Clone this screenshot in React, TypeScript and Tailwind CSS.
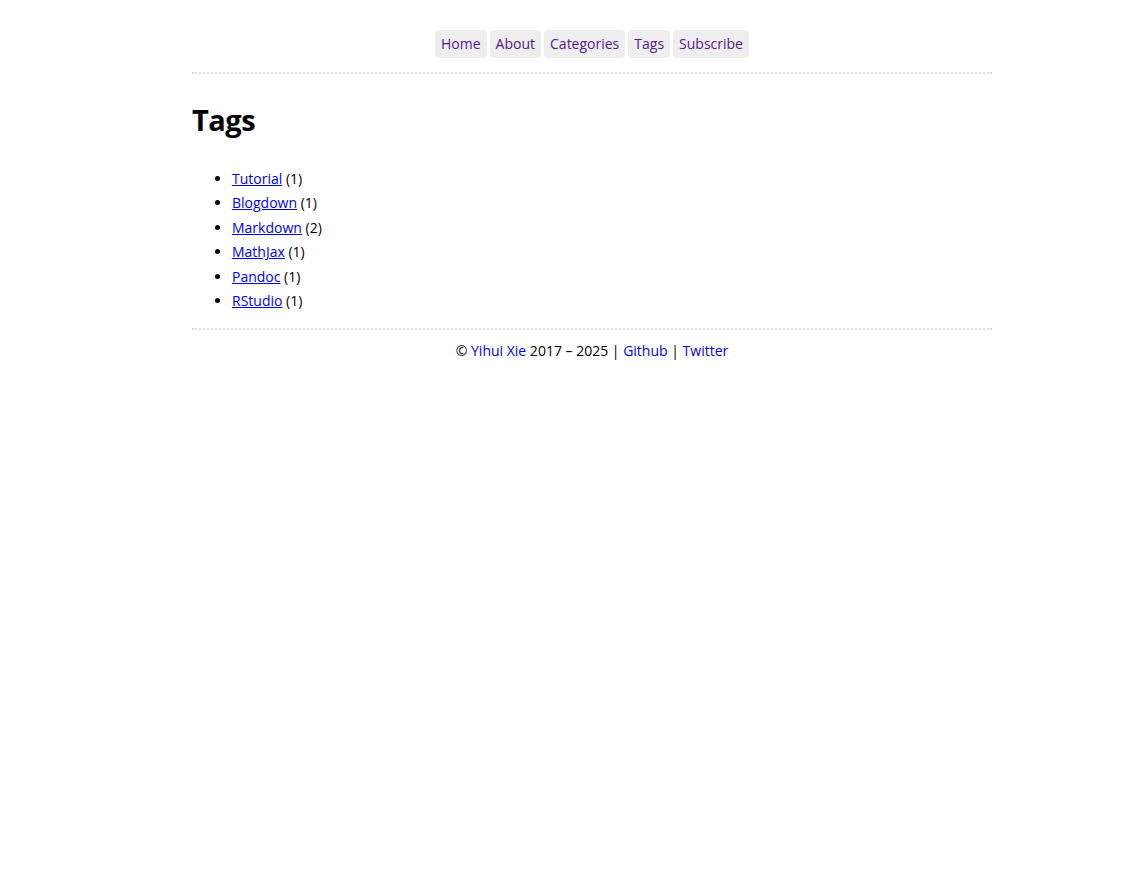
const navItems = ['Home', 'About', 'Categories', 'Tags', 'Subscribe'];

const tags = [
  { name: 'Tutorial', count: 1 },
  { name: 'Blogdown', count: 1 },
  { name: 'Markdown', count: 2 },
  { name: 'MathJax', count: 1 },
  { name: 'Pandoc', count: 1 },
  { name: 'RStudio', count: 1 },
];

export default function App() {
  return (
    <div className="min-h-[870px] bg-white text-black font-['Open_Sans',sans-serif] text-[14px]">
      <div className="ml-[192px] w-[800px]">
        <nav className="flex justify-center gap-[3px] pt-[30px] pb-[14px] border-b-2 border-dotted border-[#ddd]">
          {navItems.map((item) => (
            <a key={item} href="#" className="bg-[#eee] rounded-[4px] px-[6px] h-[28px] leading-[28px] text-[#551a8b]">
              {item}
            </a>
          ))}
        </nav>

        <h1 className="font-bold text-[29px] leading-none mt-[31px] mb-[33px] tracking-[-0.5px]">Tags</h1>

        <ul className="list-disc pl-[40px] leading-[24.4px] pb-[15px] border-b-2 border-dotted border-[#ddd]">
          {tags.map((t) => (
            <li key={t.name}>
              <a href="#" className="text-[#0000ee] underline">{t.name}</a> ({t.count})
            </li>
          ))}
        </ul>

        <footer className="text-center mt-[11px] leading-[20px]">
          © <a href="#" className="text-[#0000ee]">Yihui Xie</a> 2017 – 2025 |{' '}
          <a href="#" className="text-[#0000ee]">Github</a> |{' '}
          <a href="#" className="text-[#0000ee]">Twitter</a>
        </footer>
      </div>
    </div>
  );
}
